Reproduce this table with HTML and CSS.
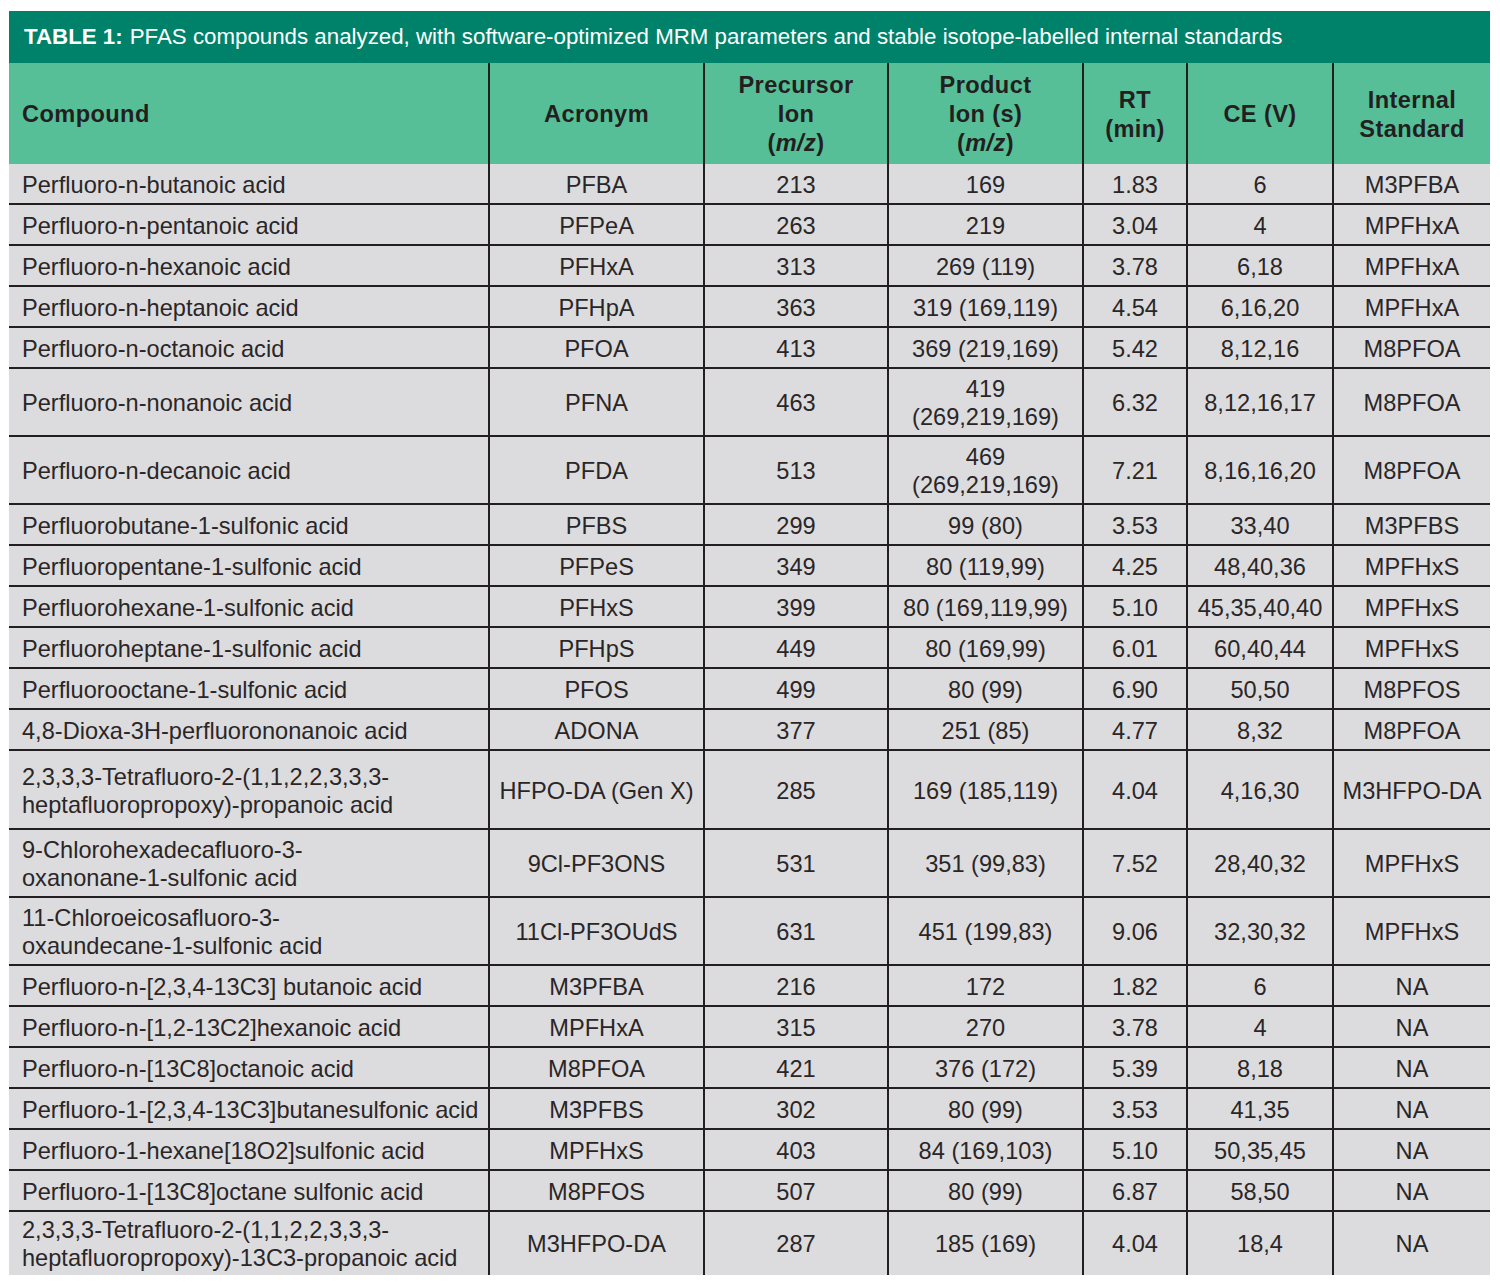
FILE: index.html
```html
<!DOCTYPE html>
<html lang="en">
<head>
<meta charset="utf-8">
<title>Table 1: PFAS compounds analyzed</title>
<link rel="stylesheet" href="styles.css">
</head>
<body>
<div class="sheet">
  <div class="title"><b>TABLE 1:</b><span>PFAS compounds analyzed, with software-optimized MRM parameters and stable isotope-labelled internal standards</span></div>
  <table class="data">
    <colgroup>
      <col class="c-compound">
      <col class="c-acronym">
      <col class="c-prec">
      <col class="c-prod">
      <col class="c-rt">
      <col class="c-ce">
      <col class="c-is">
    </colgroup>
    <thead>
      <tr>
        <th class="left">Compound</th>
        <th>Acronym</th>
        <th>Precursor<br>Ion<br>(<i>m/z</i>)</th>
        <th>Product<br>Ion (s)<br>(<i>m/z</i>)</th>
        <th>RT<br>(min)</th>
        <th>CE (V)</th>
        <th>Internal<br>Standard</th>
      </tr>
    </thead>
    <tbody>
      <tr><td>Perfluoro-n-butanoic acid</td><td>PFBA</td><td>213</td><td>169</td><td>1.83</td><td>6</td><td>M3PFBA</td></tr>
      <tr><td>Perfluoro-n-pentanoic acid</td><td>PFPeA</td><td>263</td><td>219</td><td>3.04</td><td>4</td><td>MPFHxA</td></tr>
      <tr><td>Perfluoro-n-hexanoic acid</td><td>PFHxA</td><td>313</td><td>269 (119)</td><td>3.78</td><td>6,18</td><td>MPFHxA</td></tr>
      <tr><td>Perfluoro-n-heptanoic acid</td><td>PFHpA</td><td>363</td><td>319 (169,119)</td><td>4.54</td><td>6,16,20</td><td>MPFHxA</td></tr>
      <tr><td>Perfluoro-n-octanoic acid</td><td>PFOA</td><td>413</td><td>369 (219,169)</td><td>5.42</td><td>8,12,16</td><td>M8PFOA</td></tr>
      <tr class="two"><td>Perfluoro-n-nonanoic acid</td><td>PFNA</td><td>463</td><td>419<br>(269,219,169)</td><td>6.32</td><td>8,12,16,17</td><td>M8PFOA</td></tr>
      <tr class="two"><td>Perfluoro-n-decanoic acid</td><td>PFDA</td><td>513</td><td>469<br>(269,219,169)</td><td>7.21</td><td>8,16,16,20</td><td>M8PFOA</td></tr>
      <tr><td>Perfluorobutane-1-sulfonic acid</td><td>PFBS</td><td>299</td><td>99 (80)</td><td>3.53</td><td>33,40</td><td>M3PFBS</td></tr>
      <tr><td>Perfluoropentane-1-sulfonic acid</td><td>PFPeS</td><td>349</td><td>80 (119,99)</td><td>4.25</td><td>48,40,36</td><td>MPFHxS</td></tr>
      <tr><td>Perfluorohexane-1-sulfonic acid</td><td>PFHxS</td><td>399</td><td>80 (169,119,99)</td><td>5.10</td><td>45,35,40,40</td><td>MPFHxS</td></tr>
      <tr><td>Perfluoroheptane-1-sulfonic acid</td><td>PFHpS</td><td>449</td><td>80 (169,99)</td><td>6.01</td><td>60,40,44</td><td>MPFHxS</td></tr>
      <tr><td>Perfluorooctane-1-sulfonic acid</td><td>PFOS</td><td>499</td><td>80 (99)</td><td>6.90</td><td>50,50</td><td>M8PFOS</td></tr>
      <tr><td>4,8-Dioxa-3H-perfluorononanoic acid</td><td>ADONA</td><td>377</td><td>251 (85)</td><td>4.77</td><td>8,32</td><td>M8PFOA</td></tr>
      <tr class="tall"><td>2,3,3,3-Tetrafluoro-2-(1,1,2,2,3,3,3-<br>heptafluoropropoxy)-propanoic acid</td><td>HFPO-DA (Gen X)</td><td>285</td><td>169 (185,119)</td><td>4.04</td><td>4,16,30</td><td>M3HFPO-DA</td></tr>
      <tr class="two"><td>9-Chlorohexadecafluoro-3-<br>oxanonane-1-sulfonic acid</td><td>9Cl-PF3ONS</td><td>531</td><td>351 (99,83)</td><td>7.52</td><td>28,40,32</td><td>MPFHxS</td></tr>
      <tr class="two"><td>11-Chloroeicosafluoro-3-<br>oxaundecane-1-sulfonic acid</td><td>11Cl-PF3OUdS</td><td>631</td><td>451 (199,83)</td><td>9.06</td><td>32,30,32</td><td>MPFHxS</td></tr>
      <tr><td>Perfluoro-n-[2,3,4-13C3] butanoic acid</td><td>M3PFBA</td><td>216</td><td>172</td><td>1.82</td><td>6</td><td>NA</td></tr>
      <tr><td>Perfluoro-n-[1,2-13C2]hexanoic acid</td><td>MPFHxA</td><td>315</td><td>270</td><td>3.78</td><td>4</td><td>NA</td></tr>
      <tr><td>Perfluoro-n-[13C8]octanoic acid</td><td>M8PFOA</td><td>421</td><td>376 (172)</td><td>5.39</td><td>8,18</td><td>NA</td></tr>
      <tr><td>Perfluoro-1-[2,3,4-13C3]butanesulfonic acid</td><td>M3PFBS</td><td>302</td><td>80 (99)</td><td>3.53</td><td>41,35</td><td>NA</td></tr>
      <tr><td>Perfluoro-1-hexane[18O2]sulfonic acid</td><td>MPFHxS</td><td>403</td><td>84 (169,103)</td><td>5.10</td><td>50,35,45</td><td>NA</td></tr>
      <tr><td>Perfluoro-1-[13C8]octane sulfonic acid</td><td>M8PFOS</td><td>507</td><td>80 (99)</td><td>6.87</td><td>58,50</td><td>NA</td></tr>
      <tr class="last"><td>2,3,3,3-Tetrafluoro-2-(1,1,2,2,3,3,3-<br>heptafluoropropoxy)-13C3-propanoic acid</td><td>M3HFPO-DA</td><td>287</td><td>185 (169)</td><td>4.04</td><td>18,4</td><td>NA</td></tr>
    </tbody>
  </table>
</div>
</body>
</html>
```

FILE: styles.css
```css
html, body {
  margin: 0;
  padding: 0;
  background: #ffffff;
}

body {
  font-family: "Liberation Sans", Arial, Helvetica, sans-serif;
  color: #231f20;
}

.sheet {
  width: 1481px;
  margin: 11px 0 0 9px;
}

.title {
  background: #00826a;
  color: #ffffff;
  height: 52px;
  box-sizing: border-box;
  padding: 0 0 1px 15px;
  display: flex;
  align-items: center;
  gap: 7px;
  font-size: 22.3px;
  white-space: nowrap;
}

.title b {
  font-weight: 700;
}

.data {
  width: 1481px;
  border-collapse: collapse;
  table-layout: fixed;
  font-size: 23.6px;
}

.c-compound { width: 480px; }
.c-acronym { width: 215px; }
.c-prec { width: 184px; }
.c-prod { width: 195px; }
.c-rt { width: 104px; }
.c-ce { width: 146px; }
.c-is { width: 157px; }

.data th,
.data td {
  border-left: 2px solid #231f20;
  border-right: 2px solid #231f20;
  text-align: center;
  vertical-align: middle;
  white-space: nowrap;
}

.data th:first-child,
.data td:first-child {
  border-left: none;
  text-align: left;
  padding-left: 13px;
}

.data th:last-child,
.data td:last-child {
  border-right: none;
}

.data th {
  background: #56bf98;
  font-weight: 700;
  letter-spacing: 0.4px;
  line-height: 29px;
  padding-top: 8px;
  padding-bottom: 6px;
}

.data th i {
  font-style: italic;
}

.data td {
  background: #dcdcde;
  color: #2a2627;
  font-weight: 400;
  line-height: 28px;
  padding-top: 7px;
  padding-bottom: 4px;
  border-top: 2px solid #231f20;
}

.data tbody tr:first-child td {
  border-top: none;
}

.data tr.two td {
  padding-top: 6px;
  padding-bottom: 4px;
}

.data tr.tall td {
  padding-top: 12px;
  padding-bottom: 9px;
}

.data tr.last td {
  padding-top: 4px;
  padding-bottom: 3px;
}
```
